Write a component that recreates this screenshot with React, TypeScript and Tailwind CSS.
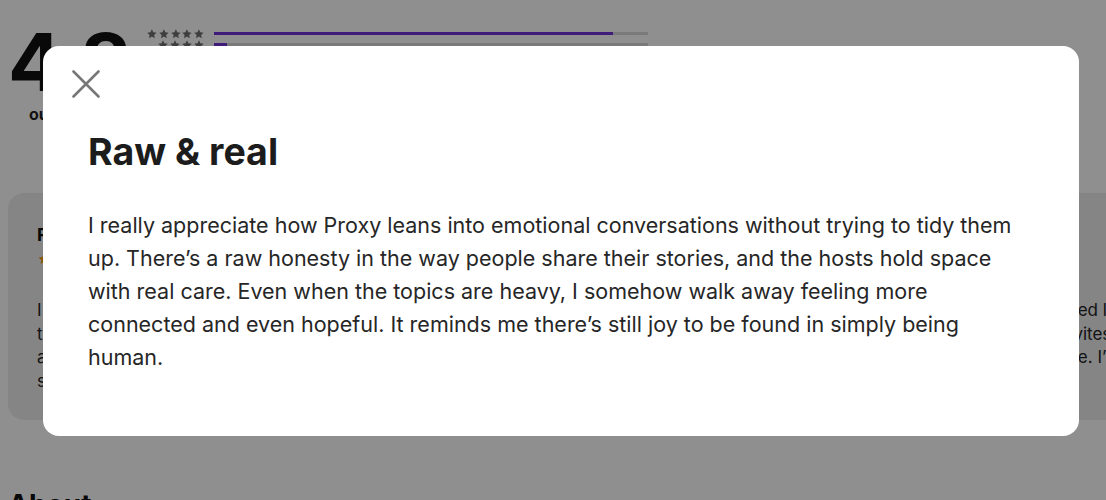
import { useState } from "react";

const ratingRows = [
  { stars: 5, pct: 92 },
  { stars: 4, pct: 3 },
  { stars: 3, pct: 2 },
  { stars: 2, pct: 1 },
  { stars: 1, pct: 2 },
];

const reviews = [
  {
    title: "Raw & real",
    body: "I really appreciate how Proxy leans into emotional conversations without trying to tidy them up. There’s a raw honesty in the way people share their stories, and the hosts hold space with real care. Even when the topics are heavy, I somehow walk away feeling more connected.",
  },
  {
    title: "A must listen",
    body: "Such an honest and moving show. I started listening on a long drive and ended up so excited to find more. The way it invites people to sit with their stories is rare, and the people behind it clearly care. I’ve shared it with my wife and friends.",
  },
];

function Star({ className = "" }: { className?: string }) {
  return (
    <svg viewBox="0 0 24 24" className={className} fill="currentColor">
      <path d="M12 2.5l2.9 6.1 6.6.8-4.9 4.6 1.3 6.6L12 17.3l-5.9 3.3 1.3-6.6-4.9-4.6 6.6-.8z" />
    </svg>
  );
}

function RatingSummary() {
  return (
    <div className="flex items-start gap-4 px-2 pt-5">
      <div className="flex w-[122px] flex-col items-start">
        <span className="text-[80px] font-bold leading-[84px] tracking-[-2px] text-[#111]">4.8</span>
        <span className="ml-[21px] text-[16px] font-bold leading-[20px] text-[#222]">out of 5</span>
      </div>
      <div className="flex w-[502px] flex-col gap-[2px] pt-[9px]">
        {ratingRows.map((r) => (
          <div key={r.stars} className="flex h-[9px] items-center gap-[9px]">
            <div className="flex w-[59px] justify-end text-[#6f6f6f]">
              {Array.from({ length: r.stars }).map((_, i) => (
                <Star key={i} className="h-[12px] w-[12px]" />
              ))}
            </div>
            <div className="h-[3px] flex-1 bg-[#dadada]">
              <div className="h-full bg-[#7030d9]" style={{ width: `${r.pct}%` }} />
            </div>
          </div>
        ))}
      </div>
    </div>
  );
}

function ReviewCard({ title, body }: { title: string; body: string }) {
  return (
    <div className="h-[227px] w-[700px] shrink-0 rounded-2xl bg-[#eeeeef] px-[29px] pt-[31px]">
      <div className="text-[18px] font-bold leading-[22px] text-[#111]">{title}</div>
      <div className="mt-[6px] flex text-[#f29d12]">
        {Array.from({ length: 5 }).map((_, i) => (
          <Star key={i} className="h-[14px] w-[14px]" />
        ))}
      </div>
      <p className="mt-[33px] line-clamp-4 text-[17px] leading-[23.5px] text-[#222]">{body}</p>
    </div>
  );
}

function CloseIcon() {
  return (
    <svg viewBox="0 0 28 28" className="h-[28px] w-[28px]" fill="none" stroke="#777" strokeWidth="2.6" strokeLinecap="round">
      <path d="M1.5 1.5l25 25M26.5 1.5l-25 25" />
    </svg>
  );
}

export default function App() {
  const [open, setOpen] = useState(true);
  return (
    <div className="relative h-[500px] w-full overflow-hidden bg-white font-['Inter',sans-serif]">
      <RatingSummary />
      <div className="mt-[69px] flex gap-4 pl-2">
        {reviews.map((r) => (
          <ReviewCard key={r.title} title={r.title} body={r.body} />
        ))}
      </div>
      <h2 className="mt-[68px] px-2 text-[28px] font-bold leading-[34px] text-[#111]">About</h2>

      {open && (
        <div className="fixed inset-0 bg-black/[0.44] pl-[43px] pt-[46px]">
          <div className="h-[390px] w-[1036px] rounded-2xl bg-white">
            <div className="pl-[29px] pt-[24px]">
              <button type="button" aria-label="Close" onClick={() => setOpen(false)} className="block">
                <CloseIcon />
              </button>
            </div>
            <div className="px-[45px]">
              <h1 className="mt-[34px] text-[37.5px] font-bold leading-[40px] text-[#1c1c1c]">Raw &amp; real</h1>
              <p className="mt-[37px] text-[21.5px] leading-[33px] text-[#262626]">
                I really appreciate how Proxy leans into emotional conversations without trying to tidy them up. There’s a raw honesty in the way people share their stories, and the hosts hold space with real care. Even when the topics are heavy, I somehow walk away feeling more connected and even hopeful. It reminds me there’s still joy to be found in simply being human.
              </p>
            </div>
          </div>
        </div>
      )}
    </div>
  );
}
